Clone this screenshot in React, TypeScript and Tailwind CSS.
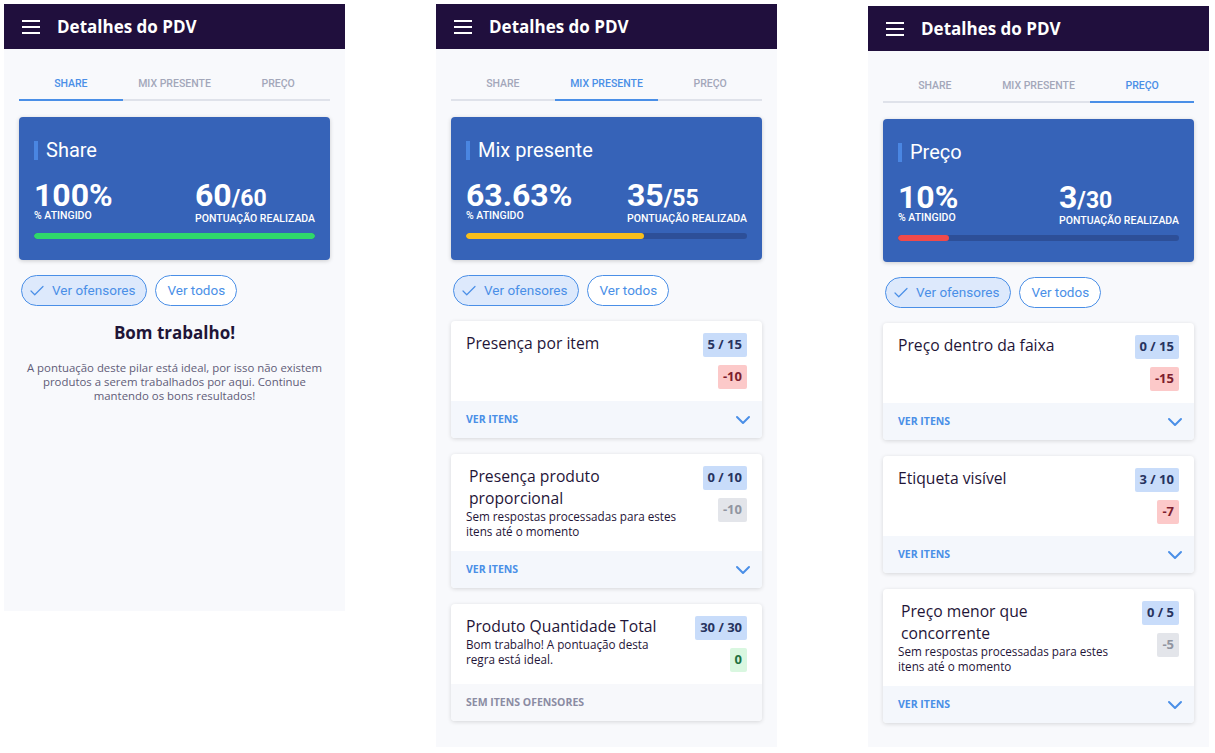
import React from "react";
import { Check, ChevronDown } from "lucide-react";

type Tone = "red" | "gray" | "green";

type Item = {
  title: string[];
  indent?: boolean;
  sub?: string[];
  score: string;
  delta: string;
  tone: Tone;
  footer: "ver" | "sem";
};

const toneCls: Record<Tone, string> = {
  red: "bg-[#fcc9c9] text-[#7d1d2e]",
  gray: "bg-[#e3e5ea] text-[#9195a1]",
  green: "bg-[#d9f7e0] text-[#1f7140]",
};

function Hamburger() {
  return (
    <svg width="18" height="14" viewBox="0 0 18 14" className="shrink-0">
      <rect x="0" y="0" width="18" height="2" fill="white" />
      <rect x="0" y="6" width="18" height="2" fill="white" />
      <rect x="0" y="12" width="18" height="2" fill="white" />
    </svg>
  );
}

function Header() {
  return (
    <div className="h-[45px] bg-[#200f3d] flex items-center pl-[18px] gap-[17px]">
      <Hamburger />
      <span className="text-white text-[17px] font-bold leading-none">Detalhes do PDV</span>
    </div>
  );
}

function Tabs({ active }: { active: number }) {
  const names = ["SHARE", "MIX PRESENTE", "PREÇO"];
  return (
    <div className="mt-[16px] mx-[15px] flex">
      {names.map((n, i) => (
        <div
          key={n}
          className={
            i === active
              ? "flex-1 h-[36px] pt-[3px] flex items-center justify-center border-b-2 border-[#4a8fe7] text-[#4a8fe7] text-[10.5px] font-medium font-['Roboto']"
              : "flex-1 h-[36px] pt-[3px] flex items-center justify-center border-b-2 border-[#dfe2ea] text-[#a3a7ba] text-[10.5px] font-medium font-['Roboto']"
          }
        >
          {n}
        </div>
      ))}
    </div>
  );
}

function ScoreCard({
  title,
  pct,
  pts,
  total,
  barColor,
  barWidth,
}: {
  title: string;
  pct: string;
  pts: string;
  total: string;
  barColor: string;
  barWidth: string;
}) {
  return (
    <div className="mt-[16px] mx-[15px] h-[143px] rounded-[4px] bg-[#3663b8] shadow-[0_1px_4px_rgba(0,0,0,0.18)] px-[15px] pt-[21px] font-['Roboto'] text-white">
      <div className="flex items-center h-[24px] gap-[8px]">
        <div className="w-[4px] h-[19px] bg-[#4a86e2]" />
        <span className="text-[20px] leading-[24px]">{title}</span>
      </div>
      <div className="mt-[19px] flex">
        <div className="w-[161px] shrink-0 flex flex-col">
          <span className="text-[32px] font-bold leading-[29px]">{pct}</span>
          <span className="text-[10.5px] font-medium leading-[12px] whitespace-nowrap">% ATINGIDO</span>
        </div>
        <div className="flex flex-col">
          <div className="flex items-baseline leading-[29px]">
            <span className="text-[32px] font-bold leading-[29px]">{pts}</span>
            <span className="text-[23px] font-bold leading-[29px]">{total}</span>
          </div>
          <span className="text-[10.5px] font-medium leading-[12px] whitespace-nowrap">PONTUAÇÃO REALIZADA</span>
        </div>
      </div>
      <div className="mt-[8px] h-[6px] rounded-[3px] bg-[#2d4f98] overflow-hidden">
        <div className={"h-full rounded-[3px] " + barColor} style={{ width: barWidth }} />
      </div>
    </div>
  );
}

function Filters() {
  return (
    <div className="mt-[15px] ml-[17px] flex gap-[8px] font-['Roboto']">
      <div className="h-[31px] rounded-full border border-[#4a8fe7] bg-[#dde9fc] flex items-center pl-[6px] pr-[11px] gap-[6px] text-[#4a8fe7] text-[13.5px]">
        <Check size={18} strokeWidth={1.6} />
        <span>Ver ofensores</span>
      </div>
      <div className="h-[31px] rounded-full border border-[#4a8fe7] bg-white flex items-center px-[11px] text-[#4a8fe7] text-[13.5px]">
        Ver todos
      </div>
    </div>
  );
}

function ItemCard({ item }: { item: Item }) {
  return (
    <div className="mx-[15px] rounded-[4px] bg-white shadow-[0_1px_4px_rgba(0,0,0,0.14)] overflow-hidden">
      <div className="flex justify-between pt-[11px] pb-[12px] px-[15px]">
        <div className="flex flex-col text-[#1f1538]">
          <div className={item.indent ? "pl-[3px] text-[15.7px] leading-[22px]" : "text-[15.7px] leading-[22px]"}>
            {item.title.map((t, i) => (
              <div key={i} className="whitespace-nowrap">
                {t}
              </div>
            ))}
          </div>
          {item.sub && (
            <div className="text-[11.7px] leading-[15px]">
              {item.sub.map((t, i) => (
                <div key={i} className="whitespace-nowrap">
                  {t}
                </div>
              ))}
            </div>
          )}
        </div>
        <div className="mt-[1px] flex flex-col items-end gap-[8px] shrink-0">
          <div className="h-[24px] px-[5px] rounded-[2px] bg-[#c8dcfa] text-[#27335f] text-[13px] font-bold flex items-center">
            {item.score}
          </div>
          <div className={"h-[24px] px-[5px] rounded-[2px] text-[13px] font-bold flex items-center " + toneCls[item.tone]}>
            {item.delta}
          </div>
        </div>
      </div>
      {item.footer === "ver" ? (
        <div className="h-[37px] bg-[#f4f7fc] flex items-center justify-between pl-[15px] pr-[7px]">
          <span className="text-[10.5px] font-bold text-[#4a8fe7]">VER ITENS</span>
          <ChevronDown size={24} strokeWidth={2} className="text-[#4a8fe7]" />
        </div>
      ) : (
        <div className="h-[37px] bg-[#f7f8fb] flex items-center pl-[15px]">
          <span className="text-[10.5px] font-bold text-[#8b8ca3]">SEM ITENS OFENSORES</span>
        </div>
      )}
    </div>
  );
}

const mixItems: Item[] = [
  { title: ["Presença por item"], score: "5 / 15", delta: "-10", tone: "red", footer: "ver" },
  {
    title: ["Presença produto", "proporcional"],
    indent: true,
    sub: ["Sem respostas processadas para estes", "itens até o momento"],
    score: "0 / 10",
    delta: "-10",
    tone: "gray",
    footer: "ver",
  },
  {
    title: ["Produto Quantidade Total"],
    sub: ["Bom trabalho! A pontuação desta", "regra está ideal."],
    score: "30 / 30",
    delta: "0",
    tone: "green",
    footer: "sem",
  },
];

const precoItems: Item[] = [
  { title: ["Preço dentro da faixa"], score: "0 / 15", delta: "-15", tone: "red", footer: "ver" },
  { title: ["Etiqueta visível"], score: "3 / 10", delta: "-7", tone: "red", footer: "ver" },
  {
    title: ["Preço menor que", "concorrente"],
    indent: true,
    sub: ["Sem respostas processadas para estes", "itens até o momento"],
    score: "0 / 5",
    delta: "-5",
    tone: "gray",
    footer: "ver",
  },
];

export default function App() {
  return (
    <div className="w-[1215px] h-[753px] bg-white flex items-start gap-[91px] pl-[4px] pt-[4px] overflow-hidden font-['Open_Sans',sans-serif]">
      {/* Panel 1 */}
      <div className="w-[341px] h-[607px] bg-[#f8f9fc] flex flex-col">
        <Header />
        <Tabs active={0} />
        <ScoreCard title="Share" pct="100%" pts="60" total="/60" barColor="bg-[#2fd86b]" barWidth="100%" />
        <Filters />
        <div className="mt-[15px] text-center text-[17px] font-bold leading-[24px] text-[#1f1538]">Bom trabalho!</div>
        <div className="mt-[16px] text-center text-[11.4px] leading-[14px] text-[#615c78]">
          <div>A pontuação deste pilar está ideal, por isso não existem</div>
          <div>produtos a serem trabalhados por aqui. Continue</div>
          <div>mantendo os bons resultados!</div>
        </div>
      </div>

      {/* Panel 2 */}
      <div className="w-[341px] h-[743px] bg-[#f8f9fc] flex flex-col">
        <Header />
        <Tabs active={1} />
        <ScoreCard title="Mix presente" pct="63.63%" pts="35" total="/55" barColor="bg-[#f8bf1c]" barWidth="63.4%" />
        <Filters />
        <div className="mt-[15px] flex flex-col gap-[16px]">
          {mixItems.map((it, i) => (
            <ItemCard key={i} item={it} />
          ))}
        </div>
      </div>

      {/* Panel 3 */}
      <div className="mt-[2px] w-[341px] h-[741px] bg-[#f8f9fc] flex flex-col">
        <Header />
        <Tabs active={2} />
        <ScoreCard title="Preço" pct="10%" pts="3" total="/30" barColor="bg-[#f04a4a]" barWidth="18%" />
        <Filters />
        <div className="mt-[15px] flex flex-col gap-[16px]">
          {precoItems.map((it, i) => (
            <ItemCard key={i} item={it} />
          ))}
        </div>
      </div>
    </div>
  );
}
